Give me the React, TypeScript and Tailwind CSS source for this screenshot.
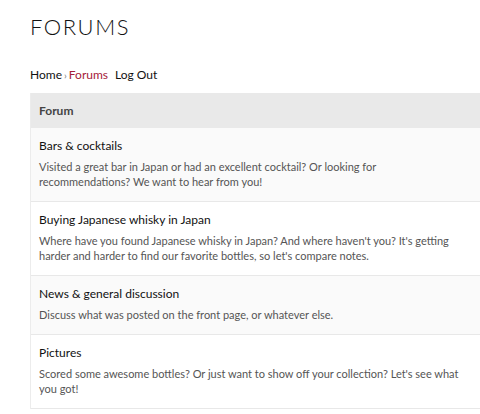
const forums = [
  {
    title: 'Bars & cocktails',
    desc: 'Visited a great bar in Japan or had an excellent cocktail? Or looking for recommendations? We want to hear from you!',
  },
  {
    title: 'Buying Japanese whisky in Japan',
    desc: "Where have you found Japanese whisky in Japan? And where haven't you? It's getting harder and harder to find our favorite bottles, so let's compare notes.",
  },
  {
    title: 'News & general discussion',
    desc: 'Discuss what was posted on the front page, or whatever else.',
  },
  {
    title: 'Pictures',
    desc: "Scored some awesome bottles? Or just want to show off your collection? Let's see what you got!",
  },
]

export default function App() {
  return (
    <div
      className="bg-white min-h-screen overflow-hidden pl-[30px] pt-[13px]"
      style={{ fontFamily: "Lato, 'Open Sans', sans-serif" }}
    >
      <h1 className="text-[22px] leading-[28px] font-light tracking-[0.07em] text-[#111]">FORUMS</h1>

      <div className="mt-[26px] text-[12px] leading-[16px] text-[#111] flex items-center">
        <span>Home</span>
        <span className="mx-[2px] text-[10px] text-[#777]">›</span>
        <span className="text-[#a5203a]">Forums</span>
        <span className="ml-[7px]">Log Out</span>
      </div>

      <div className="mt-[10px] w-[470px] border-l border-[#ececec]">
        <div className="bg-[#e9e9e9] h-[35px] flex items-center px-[8px]">
          <span className="text-[12px] font-bold text-[#444]">Forum</span>
        </div>
        {forums.map((f, i) => (
          <div
            key={f.title}
            className={`border-b border-[#e8e8e8] pl-[8px] pr-[36px] pt-[9px] pb-[12px] ${i % 2 === 0 ? 'bg-[#fafafa]' : 'bg-white'}`}
          >
            <p className="text-[12px] leading-[17px] text-[#111]">{f.title}</p>
            <p className="mt-[5px] text-[11px] leading-[15px] text-[#555]">{f.desc}</p>
          </div>
        ))}
      </div>
    </div>
  )
}
